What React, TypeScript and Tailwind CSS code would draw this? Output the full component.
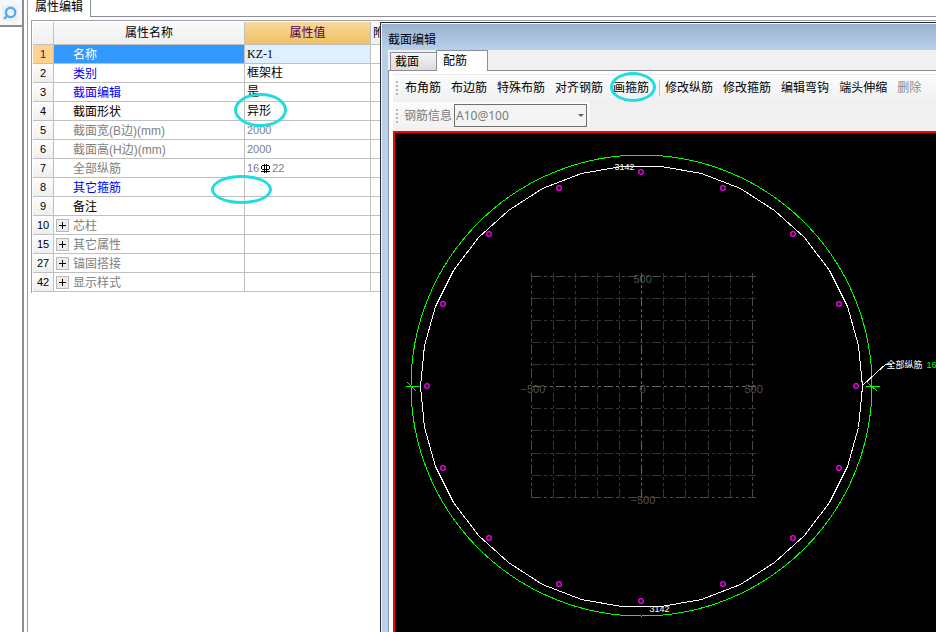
import { FiSearch } from "react-icons/fi";

interface PropertyRow {
  no: number;
  name: string;
  value?: React.ReactNode;
  tone: "edit" | "normal" | "muted" | "selected";
  expandable?: boolean;
  mark?: React.ReactNode;
}

const NAME_TONE = {
  edit: "text-[#0000ff]",
  normal: "text-black",
  muted: "text-[#808080]",
  selected: "text-white bg-[#3399ff]",
};

const MARK = "absolute z-10 rounded-[50%] border-3 border-[#20dbdf] pointer-events-none";

const ROWS: PropertyRow[] = [
  {
    no: 1,
    name: "名称",
    value: <span className="font-['Liberation_Serif',serif]">KZ-1</span>,
    tone: "selected",
  },
  { no: 2, name: "类别", value: "框架柱", tone: "edit" },
  { no: 3, name: "截面编辑", value: "是", tone: "edit" },
  {
    no: 4,
    name: "截面形状",
    value: "异形",
    tone: "normal",
    mark: <span className={`${MARK} -left-[13px] -top-[9px] h-[34px] w-[53px]`} />,
  },
  { no: 5, name: "截面宽(B边)(mm)", value: "2000", tone: "muted" },
  { no: 6, name: "截面高(H边)(mm)", value: "2000", tone: "muted" },
  {
    no: 7,
    name: "全部纵筋",
    value: (
      <span className="flex items-center gap-px">
        16
        <RebarIcon />
        22
      </span>
    ),
    tone: "muted",
  },
  {
    no: 8,
    name: "其它箍筋",
    tone: "edit",
    mark: <span className={`${MARK} -left-9 -top-[3px] h-[29px] w-[61px]`} />,
  },
  { no: 9, name: "备注", tone: "normal" },
  { no: 10, name: "芯柱", tone: "muted", expandable: true },
  { no: 15, name: "其它属性", tone: "muted", expandable: true },
  { no: 27, name: "锚固搭接", tone: "muted", expandable: true },
  { no: 42, name: "显示样式", tone: "muted", expandable: true },
];

const App: React.FC = () => {
  return (
    <div className="relative flex min-h-screen overflow-hidden bg-white text-xs text-black font-['Liberation_Sans','Noto_Sans_CJK_SC',sans-serif]">
      <aside className="w-6 shrink-0 border-r-2 border-[#8c8c93]">
        <div className="flex h-[27px] items-center border-b-2 border-[#8c8c93] bg-[#f7f7f7] pl-[2px]">
          <button
            aria-label="查找"
            className="flex h-4 w-4 items-center justify-center bg-[#e6f2fc] text-[#5aa9e6]"
          >
            <FiSearch className="-scale-x-100" size={14} strokeWidth={4} />
          </button>
        </div>
      </aside>

      <main className="ml-[3px] min-w-0 grow border-l border-[#a0a0a6]">
        <div className="flex h-[17px]">
          <button className="w-[63px] shrink-0 border-r border-[#8c8c9b] pb-1 leading-3">
            属性编辑
          </button>
          <div className="grow border-b border-[#8c8c9b]" />
        </div>
        <div className="ml-[3px] mt-[3px] border-l border-t border-[#a0a0a6] p-px">
          <PropertyTable />
        </div>
      </main>

      <SectionWindow />
    </div>
  );
};

export default App;

const PropertyTable: React.FC = () => {
  return (
    <table className="w-full table-fixed border-separate border-spacing-0">
      <colgroup>
        <col className="w-[21px]" />
        <col className="w-[191px]" />
        <col className="w-[126px]" />
        <col />
      </colgroup>
      <thead>
        <tr className="h-[23px] bg-linear-to-b from-[#fafafa] to-[#efefef]">
          <th className="border-b border-r border-[#c0c0c0] p-0" />
          <th className="border-b border-r border-[#c0c0c0] p-0 font-normal">属性名称</th>
          <th className="border-b border-r border-[#c0c0c0] bg-linear-to-b from-[#f9d89c] to-[#f0c060] p-0 font-normal text-[#500050]">
            属性值
          </th>
          <th className="border-b border-[#c0c0c0] p-0 pl-[2px] text-left font-normal">附</th>
        </tr>
      </thead>
      <tbody>
        {ROWS.map((row) => (
          <PropertyLine key={row.no} {...row} />
        ))}
      </tbody>
    </table>
  );
};

const PropertyLine: React.FC<PropertyRow> = ({ no, name, value, tone, expandable, mark }) => {
  const selected = tone === "selected";

  return (
    <tr className="h-[19px] leading-[18px]">
      <th
        className={`border-b border-r border-[#c0c0c0] p-0 text-center text-[11px] font-normal ${
          selected ? "bg-[#ffd38c] text-[#600060]" : "bg-linear-to-b from-[#fdfdfd] to-[#efefef]"
        }`}
      >
        {no}
      </th>
      <td className={`border-b border-r border-[#c0c0c0] p-0 ${NAME_TONE[tone]}`}>
        <div className="flex h-[18px] items-center">
          <div className="flex w-[19px] shrink-0 pl-[2px]">
            {expandable && (
              <button
                aria-label={`展开${name}`}
                className="flex h-[13px] w-[13px] items-center justify-center border border-[#b8b8b8] bg-[#ececec] text-black"
              >
                <svg width="9" height="9" shapeRendering="crispEdges">
                  <path d="M1 4.5H8M4.5 1V8" stroke="currentColor" />
                </svg>
              </button>
            )}
          </div>
          <span className="pt-[2px] leading-4">{name}</span>
        </div>
      </td>
      <td
        className={`border-b border-r border-[#c0c0c0] p-0 pl-[2px] ${selected ? "bg-[#e0efff]" : ""} ${
          tone === "muted" ? "text-[11px] text-[#808080]" : ""
        }`}
      >
        <div className="relative h-[18px]">
          {value}
          {mark}
        </div>
      </td>
      <td className="border-b border-[#c0c0c0] p-0" />
    </tr>
  );
};

function RebarIcon() {
  return (
    <svg width="11" height="11" viewBox="0 0 11 11" fill="none" stroke="#000" shapeRendering="crispEdges">
      <path d="M2 2.5H9M1.5 3V6M9.5 3V6M2 6.5H9M1 8.5H10M4.5 1V10M6.5 1V10" />
    </svg>
  );
}

const SectionWindow: React.FC = () => {
  return (
    <section className="absolute bottom-0 left-[380px] right-0 top-[22px] flex flex-col border-l border-t border-[#2b2b30] bg-[#b9d0ea]">
      <header className="h-[27px] shrink-0 border-l border-t border-[#eef4fb] bg-linear-to-b from-[#98b3d0] to-[#b9d0ea] pl-[6px] leading-8">
        截面编辑
      </header>
      <div className="flex min-h-0 grow border-l border-[#eef4fb] pl-[6px]">
        <div className="flex min-w-0 grow flex-col bg-white">
          <div className="flex h-[21px] shrink-0 items-end bg-[#f0f0f0]">
            <div className="w-[2px] self-stretch border-b border-[#8c8c9b]" />
            <button className="h-[19px] w-[46px] border border-r-0 border-[#8c8c9b] bg-linear-to-b from-[#f5f5f5] to-[#dcdcdc] pl-1 pt-px text-left leading-4">
              截面
            </button>
            <button className="h-[21px] w-[52px] border border-b-0 border-[#8c8c9b] bg-white pl-[6px] text-left leading-[18px]">
              配筋
            </button>
            <div className="grow self-stretch border-b border-[#8c8c9b]" />
          </div>
          <div className="flex min-h-0 grow flex-col border-l border-[#8c8c9b] pl-1 pt-[3px]">
            <div className="shrink-0 border-t border-[#ececec] bg-[#f0f0f0]">
              <MainToolbar />
              <InfoToolbar />
            </div>
            <div className="min-h-0 grow overflow-hidden border-l-2 border-t-2 border-[#ff0000] bg-black">
              <SectionDrawing />
            </div>
          </div>
        </div>
      </div>
    </section>
  );
};

const Grip = () => (
  <span className="flex w-[2px] shrink-0 flex-col gap-[2px]">
    <i className="h-[2px] bg-[#b8b8b8]" />
    <i className="h-[2px] bg-[#b8b8b8]" />
    <i className="h-[2px] bg-[#b8b8b8]" />
    <i className="h-[2px] bg-[#b8b8b8]" />
  </span>
);

const MainToolbar: React.FC = () => {
  return (
    <div className="flex h-[27px] items-center gap-[10px] whitespace-nowrap bg-linear-to-b from-[#fcfcfc] to-[#f0f0f0] pb-[2px] pl-[3px]">
      <div className="flex items-center gap-[7px]">
        <Grip />
        <button>布角筋</button>
      </div>
      <button>布边筋</button>
      <button>特殊布筋</button>
      <button>对齐钢筋</button>
      <button className="relative">
        画箍筋
        <span className={`${MARK} -left-[3px] -top-2 h-[30px] w-[46px]`} />
      </button>
      <div className="flex items-center gap-[5px]">
        <span className="h-4 w-px bg-[#c4c4c4]" />
        <button>修改纵筋</button>
      </div>
      <button>修改箍筋</button>
      <button>编辑弯钩</button>
      <button>端头伸缩</button>
      <button className="text-[#8a8a8a]">删除</button>
    </div>
  );
};

const InfoToolbar: React.FC = () => {
  return (
    <div className="flex h-[29px] w-[197px] items-center bg-linear-to-b from-[#fcfcfc] to-[#f0f0f0] pb-[2px] pl-[3px] text-[#7a7a7a]">
      <Grip />
      <label htmlFor="rebar-info" className="ml-[6px] mr-[2px] shrink-0">
        钢筋信息
      </label>
      <div className="relative">
        <select
          id="rebar-info"
          className="block h-[23px] w-[133px] appearance-none border border-[#707070] bg-[#f4f4f4] pl-px text-xs font-['Noto_Sans',sans-serif]"
        >
          <option>A10@100</option>
        </select>
        <span className="pointer-events-none absolute right-[3px] top-[10px] border-x-3 border-t-3 border-x-transparent border-t-[#606060]" />
      </div>
    </div>
  );
};

// Points of a regular polygon around the section's centre.
const ring = (count: number, radius: number) =>
  Array.from({ length: count }, (_, i) => {
    const a = (i * 2 * Math.PI) / count;
    return [Math.round(radius * Math.cos(a)), Math.round(radius * Math.sin(a))];
  });

const GRID = [-110, -88, -66, -44, -22, 0, 22, 44, 67, 89, 111];

const gridColor = (n: number) => {
  if (n === 0) return "#666666";
  return Math.abs(n) > 100 ? "#484848" : "#343434";
};

const SectionDrawing: React.FC = () => {
  return (
    <svg className="block h-full w-full" fill="none">
      <g transform="translate(246.5 253.5)">
        <g shapeRendering="crispEdges" strokeDasharray="9 3 3 3 3 3">
          {GRID.map((n) => (
            <path key={n} d={`M${n} -114V111M-110 ${n}H114`} stroke={gridColor(n)} />
          ))}
        </g>

        <g fill="#505050" fontSize="11">
          <text x="-8" y="-104">500</text>
          <text x="-2" y="6">0</text>
          <text x="103" y="6">500</text>
          <text x="-121" y="6">−500</text>
          <text x="-11" y="117">−500</text>
        </g>

        <g shapeRendering="crispEdges">
          <circle cx="0" cy="-1" r="230.5" stroke="#00ff00" />
          <polygon points={ring(34, 221).join(" ")} stroke="#ffffff" />
          <path d="M-236 0H-222M-234 -4L-225 5" stroke="#00ff00" />
          <path d="M224 0H238M226 -4L236 5" stroke="#00ff00" />
          <path d="M221 -1L235 -14L244 -22H250" stroke="#ffffff" />
        </g>

        {/* longitudinal bars */}
        <g stroke="#ff00ff" strokeWidth="1.3">
          {ring(16, 214.5).map(([x, y]) => (
            <circle key={`${x},${y}`} cx={x - 0.5} cy={y - 0.5} r="2.3" />
          ))}
        </g>

        <g fill="#ffffff" fontSize="9">
          <text x="-27" y="-217">3142</text>
          <text x="8" y="225">3142</text>
          <text x="245" y="-19">全部纵筋</text>
          <text x="285" y="-19" fill="#00ff00">
            16
          </text>
        </g>
      </g>
    </svg>
  );
};
